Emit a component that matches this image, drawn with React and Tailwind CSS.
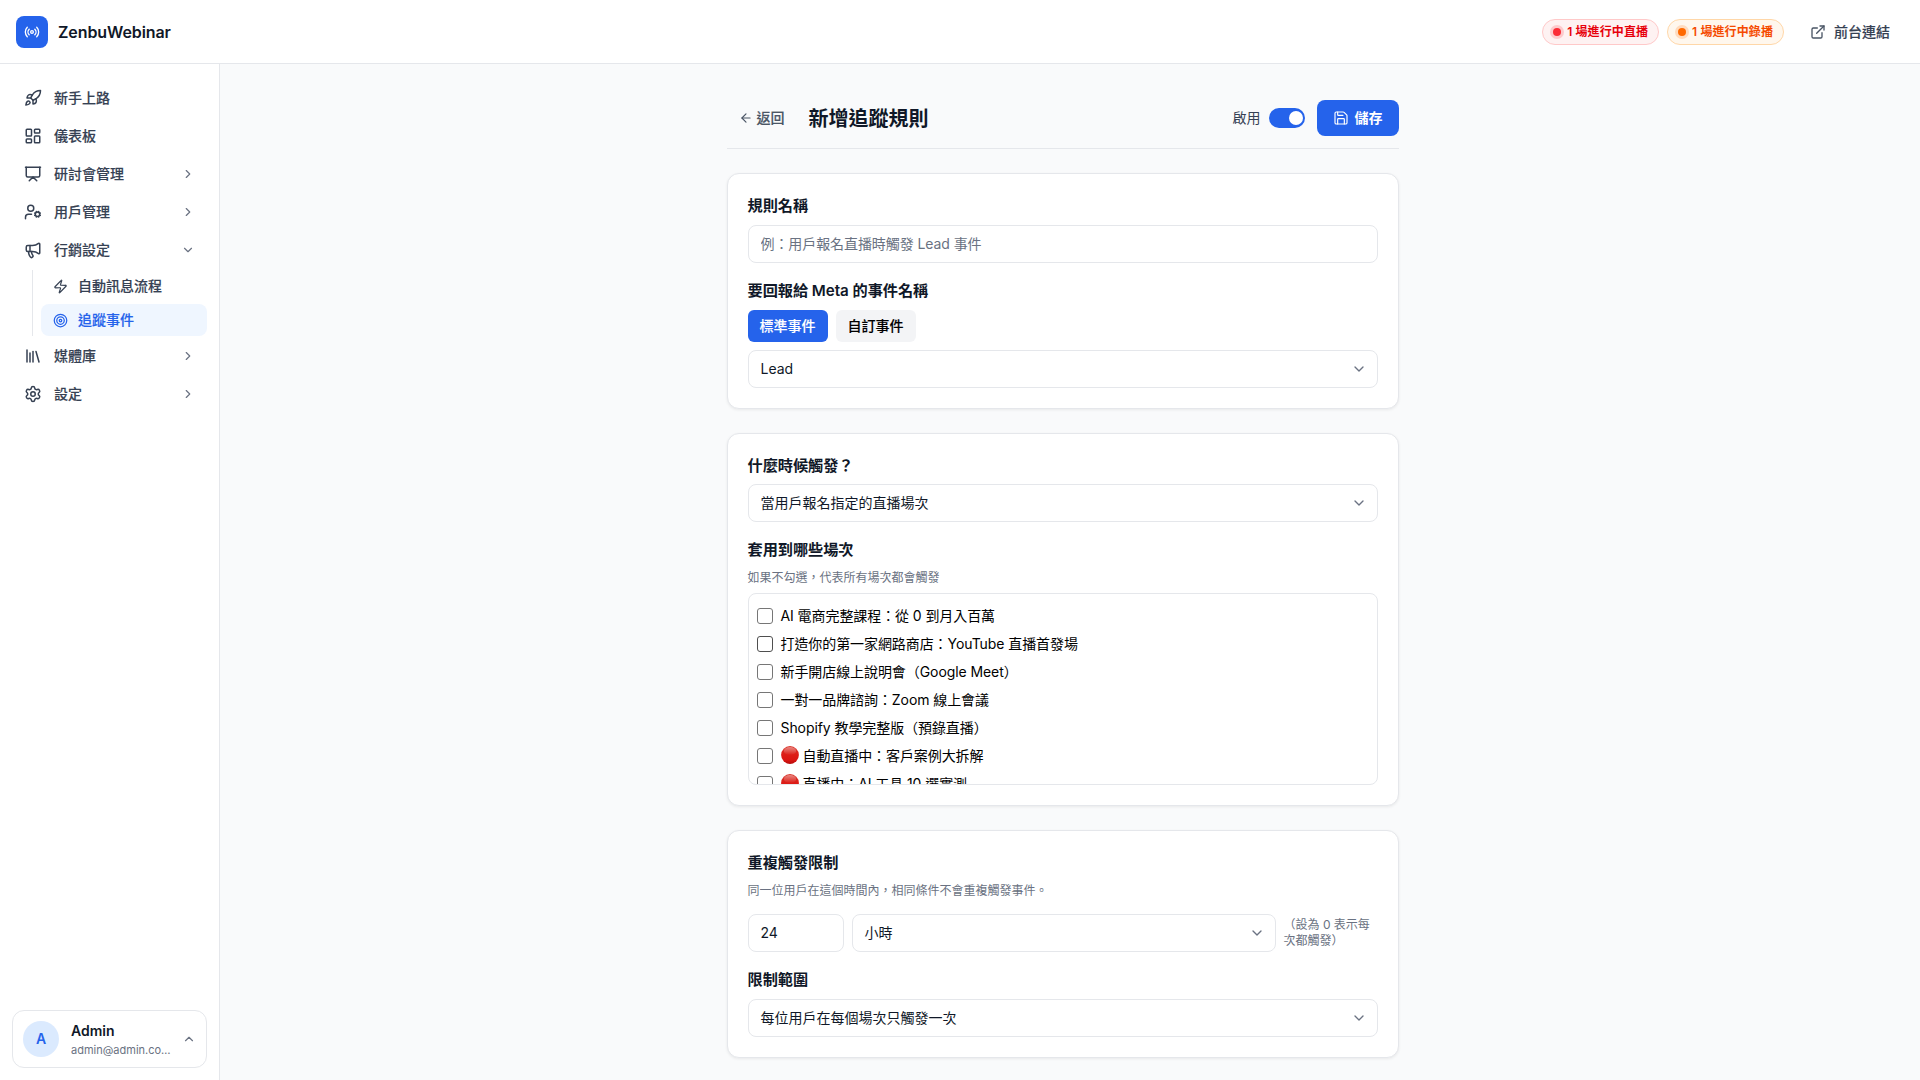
import { useState } from 'react';
import {
  ArrowLeft,
  ChevronDown,
  ChevronRight,
  ChevronUp,
  ExternalLink,
  LayoutDashboard,
  Library,
  Megaphone,
  Presentation,
  Radio,
  Rocket,
  Save,
  Settings,
  Target,
  UserCog,
  Zap,
} from 'lucide-react';

const sessions = [
  { title: 'AI 電商完整課程：從 0 到月入百萬' },
  { title: '打造你的第一家網路商店：YouTube 直播首發場', focused: true },
  { title: '新手開店線上說明會（Google Meet）' },
  { title: '一對一品牌諮詢：Zoom 線上會議' },
  { title: 'Shopify 教學完整版（預錄直播）' },
  { title: '自動直播中：客戶案例大拆解', live: true },
  { title: '直播中：AI 工具 10 選實測', live: true },
];

// the CJK font has no medium weight, a thin stroke stands in for it
const medium = 'font-medium [-webkit-text-stroke:0.15px_currentColor]';

const NavItem = ({ icon: Icon, label, arrow: Arrow }) => (
  <a className={`flex h-9 items-center gap-3 rounded-lg px-3 text-sm text-gray-700 ${medium}`}>
    <Icon size={18} className="shrink-0" />
    <span className="flex-1">{label}</span>
    {Arrow && <Arrow size={14} className="text-gray-500" />}
  </a>
);

const SubItem = ({ icon: Icon, label, active }) => (
  <a
    className={`flex h-8 items-center gap-2.5 rounded-lg px-3 text-sm ${medium} ${
      active ? 'bg-[#eff6ff] text-[#2563eb]' : 'text-gray-700'
    }`}
  >
    <Icon size={15} className="shrink-0" />
    <span>{label}</span>
  </a>
);

const Sidebar = () => (
  <aside className="flex w-[220px] shrink-0 flex-col border-r border-gray-200 bg-white">
    <nav className="flex flex-1 flex-col gap-0.5 px-3 pt-4">
      <NavItem icon={Rocket} label="新手上路" />
      <NavItem icon={LayoutDashboard} label="儀表板" />
      <NavItem icon={Presentation} label="研討會管理" arrow={ChevronRight} />
      <NavItem icon={UserCog} label="用戶管理" arrow={ChevronRight} />
      <NavItem icon={Megaphone} label="行銷設定" arrow={ChevronDown} />
      <div className="ml-5 flex flex-col gap-0.5 border-l border-gray-200 pl-2">
        <SubItem icon={Zap} label="自動訊息流程" />
        <SubItem icon={Target} label="追蹤事件" active />
      </div>
      <NavItem icon={Library} label="媒體庫" arrow={ChevronRight} />
      <NavItem icon={Settings} label="設定" arrow={ChevronRight} />
    </nav>

    <div className="p-3">
      <button className="flex h-[58px] w-full items-center gap-3 rounded-xl border border-gray-200 px-2.5 text-left">
        <span className="flex size-9 shrink-0 items-center justify-center rounded-full bg-[#dbeafe] text-sm font-semibold text-[#2563eb]">
          A
        </span>
        <span className="min-w-0 flex-1">
          <span className="block text-sm leading-5 font-semibold text-gray-900">Admin</span>
          <span className="mt-px block text-[11px] leading-4 whitespace-nowrap text-gray-500">admin@admin.co…</span>
        </span>
        <ChevronUp size={14} className="shrink-0 text-gray-500" />
      </button>
    </div>
  </aside>
);

const Header = () => (
  <header className="flex h-16 shrink-0 items-center justify-between border-b border-gray-200 bg-white px-4">
    <div className="flex items-center gap-2.5">
      <div className="flex size-8 items-center justify-center rounded-lg bg-[#2563eb] text-white">
        <Radio size={16} />
      </div>
      <span className="text-base font-semibold tracking-[-0.1px] text-gray-900">ZenbuWebinar</span>
    </div>

    <div className="flex items-center gap-2">
      <span className="flex h-[26px] items-center gap-1.5 rounded-full border border-red-200 bg-red-50 px-2.5 text-xs font-semibold tracking-[0.1px] text-red-600">
        <span className="size-2 rounded-full bg-red-500 ring-[3px] ring-red-500/20" />
        1 場進行中直播
      </span>
      <span className="flex h-[26px] items-center gap-1.5 rounded-full border border-orange-200 bg-orange-50 px-2.5 text-xs font-semibold tracking-[0.1px] text-orange-600">
        <span className="size-2 rounded-full bg-orange-500 ring-[3px] ring-orange-500/20" />
        1 場進行中錄播
      </span>
      <a className={`ml-1 flex items-center gap-2 px-3.5 text-sm text-gray-700 ${medium}`}>
        <ExternalLink size={16} className="text-gray-600" />
        前台連結
      </a>
    </div>
  </header>
);

const Card = ({ children }) => (
  <section className="mt-6 rounded-xl border border-gray-200 bg-white p-5 shadow-[0_1px_3px_rgba(0,0,0,0.07)]">
    {children}
  </section>
);

const Label = ({ children }) => (
  <h3 className="flex h-[22.8px] items-center pt-0.5 text-[15.2px] font-semibold tracking-[-0.05px] text-gray-900">
    {children}
  </h3>
);

const SelectBox = ({ value, className = 'w-full' }) => (
  <button
    className={`flex h-[38px] items-center justify-between rounded-lg border border-gray-200 bg-white pr-2.5 pl-3 text-sm text-gray-900 ${className}`}
  >
    {value}
    <ChevronDown size={16} className="text-gray-500" />
  </button>
);

const RedBall = () => (
  <svg width="18" height="18" viewBox="0 0 18 18" className="mt-[-2px] mr-1 shrink-0">
    <defs>
      <linearGradient id="ball" x1="0" y1="0" x2="0" y2="1">
        <stop offset="0" stopColor="#d9382e" />
        <stop offset="0.5" stopColor="#dd1c16" />
        <stop offset="0.8" stopColor="#d91512" />
        <stop offset="1" stopColor="#b50c0c" />
      </linearGradient>
      <linearGradient id="shine" x1="0" y1="0" x2="0" y2="1">
        <stop offset="0" stopColor="#fff" stopOpacity="0.4" />
        <stop offset="1" stopColor="#fff" stopOpacity="0" />
      </linearGradient>
    </defs>
    <circle cx="9" cy="9" r="8.9" fill="url(#ball)" />
    <ellipse cx="9" cy="5" rx="6.2" ry="4" fill="url(#shine)" />
  </svg>
);

const App = () => {
  const [eventType, setEventType] = useState('standard');

  const tabClass = (type) =>
    `h-8 rounded-md px-3 text-sm ${medium} ${
      eventType === type ? 'bg-[#2563eb] text-white' : 'bg-gray-100 text-black'
    }`;

  return (
    <div
      lang="zh-TW"
      className="flex h-screen flex-col overflow-hidden bg-[#f9fafb] font-['Inter','Noto_Sans_CJK_TC',sans-serif] text-black"
    >
      <Header />
      <div className="flex min-h-0 flex-1">
        <Sidebar />
        <main className="min-w-0 flex-1 overflow-hidden pt-9 pr-[15px]">
          <div className="mx-auto w-[672px]">
            <div className="flex items-center justify-between border-b border-gray-200 pb-3">
              <div className="flex items-center gap-3">
                <button className={`flex h-9 items-center gap-1 px-3 text-sm text-gray-600 ${medium}`}>
                  <ArrowLeft size={14} />
                  返回
                </button>
                <h1 className="pt-0.5 text-xl font-semibold text-gray-900">新增追蹤規則</h1>
              </div>
              <div className="flex items-center gap-3">
                <label className="flex items-center gap-2 text-sm text-gray-700">
                  啟用
                  <span className="flex h-5 w-9 items-center justify-end rounded-full bg-[#2563eb] pr-0.5">
                    <span className="size-3.5 rounded-full bg-white" />
                  </span>
                </label>
                <button className="flex h-9 items-center gap-1.5 rounded-lg bg-[#2563eb] px-4 text-sm font-semibold text-white">
                  <Save size={16} strokeWidth={1.75} />
                  儲存
                </button>
              </div>
            </div>

            <Card>
              <Label>規則名稱</Label>
              <input
                className="mt-2 block h-[38px] w-full rounded-lg border border-gray-200 bg-white px-3 pb-px text-sm tracking-[-0.08px] placeholder:text-gray-500"
                placeholder="例：用戶報名直播時觸發 Lead 事件"
              />
              <div className="mt-4">
                <Label>要回報給 Meta 的事件名稱</Label>
              </div>
              <div className="my-2 flex gap-2">
                <button className={tabClass('standard')} onClick={() => setEventType('standard')}>
                  標準事件
                </button>
                <button className={tabClass('custom')} onClick={() => setEventType('custom')}>
                  自訂事件
                </button>
              </div>
              <SelectBox value="Lead" />
            </Card>

            <Card>
              <Label>什麼時候觸發？</Label>
              <div className="mt-2 mb-4">
                <SelectBox value="當用戶報名指定的直播場次" />
              </div>
              <Label>套用到哪些場次</Label>
              <p className="mt-[9px] mb-[7px] text-xs text-gray-500">如果不勾選，代表所有場次都會觸發</p>
              <div className="h-48 overflow-x-hidden overflow-y-auto rounded-lg border border-gray-200 p-2 [scrollbar-width:none]">
                {sessions.map((s) => (
                  <label key={s.title} className="flex h-7 items-center text-sm tracking-[-0.08px]">
                    <input
                      type="checkbox"
                      className={`mr-2 size-4 shrink-0 appearance-none rounded-[3px] border bg-white ${
                        s.focused ? 'border-[#4f4f4f]' : 'border-[#767676]'
                      }`}
                    />
                    {s.live && <RedBall />}
                    {s.title}
                  </label>
                ))}
              </div>
            </Card>

            <Card>
              <Label>重複觸發限制</Label>
              <p className="mt-[9px] mb-[15px] text-xs text-gray-500">
                同一位用戶在這個時間內，相同條件不會重複觸發事件。
              </p>
              <div className="flex items-center gap-2">
                <input
                  className="h-[38px] w-24 shrink-0 rounded-lg border border-gray-200 bg-white px-3 text-sm text-gray-900"
                  defaultValue="24"
                />
                <SelectBox value="小時" className="w-[424px] shrink-0" />
                <span className="text-xs text-gray-500">（設為 0 表示每次都觸發）</span>
              </div>
              <div className="mt-4 mb-2">
                <Label>限制範圍</Label>
              </div>
              <SelectBox value="每位用戶在每個場次只觸發一次" />
            </Card>
          </div>
        </main>
      </div>
    </div>
  );
};

export default App;
